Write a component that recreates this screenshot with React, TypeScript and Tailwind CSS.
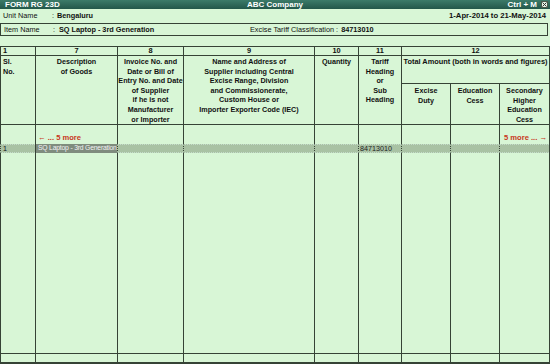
import React from "react";

const COLS = "grid-cols-[35px_82px_66px_131px_44px_43px_49px_49px_50px]";
const LINE = "border-[#364336]";

// header texts for columns 1..11 (col 12 handled on its own)
const headers: { num: string; lines: string[]; left?: boolean }[] = [
    { num: "1", lines: ["Sl.", "No."], left: true },
    { num: "7", lines: ["Description", "of Goods"] },
    { num: "8", lines: ["Invoice No. and", "Date or Bill of", "Entry No. and Date", "of Supplier", "if he is not", "Manufacturer", "or Importer"] },
    { num: "9", lines: ["Name and Address of", "Supplier including Central", "Excise Range, Division", "and Commissionerate,", "Custom House or", "Importer Exporter Code (IEC)"] },
    { num: "10", lines: ["Quantity"] },
    { num: "11", lines: ["Tariff", "Heading", "or", "Sub", "Heading"] },
];

const subHeaders = [
    ["Excise", "Duty"],
    ["Education", "Cess"],
    ["Secondary", "Higher", "Education", "Cess"],
];

function Lines({ lines }: { lines: string[] }) {
    return (
        <>
            {lines.map((l, i) => (
                <div key={i} className="whitespace-nowrap">{l}</div>
            ))}
        </>
    );
}

export default function App() {
    return (
        <div
            className="w-[550px] h-[364px] flex flex-col bg-[#d8f6d6] text-[#111] overflow-hidden"
            style={{ fontFamily: '"Liberation Sans", Arial, sans-serif' }}
        >
            {/* Title bar */}
            <div className="h-[9px] flex items-center bg-gradient-to-b from-[#3c7b69] to-[#23574a] text-white font-bold text-[8px] leading-none px-[5px] relative">
                <span>FORM RG 23D</span>
                <span className="absolute left-0 right-0 text-center pointer-events-none">ABC Company</span>
                <span className="ml-auto mr-[4px]">Ctrl + M</span>
                <span className="w-[7px] h-[7px] bg-[#e4f4e4] border border-[#4a5a4a] flex items-center justify-center -mr-[3px]">
                    <svg width="5" height="5" viewBox="0 0 5 5">
                        <path d="M0.5 0.5 L4.5 4.5 M4.5 0.5 L0.5 4.5" stroke="#333" strokeWidth="1" />
                    </svg>
                </span>
            </div>

            {/* Unit row */}
            <div className="h-[14px] flex items-center text-[7.3px] leading-none px-[3px]">
                <span className="w-[49px]">Unit Name</span>
                <span className="w-[5px]">:</span>
                <span className="font-bold">Bengaluru</span>
                <span className="ml-auto mr-[1px] font-bold text-[7.7px]">1-Apr-2014 to 21-May-2014</span>
            </div>

            {/* Item row */}
            <div className={`h-[13px] flex items-center text-[7.3px] leading-none px-[3px] border ${LINE} mr-[2px]`}>
                <span className="w-[49px]">Item Name</span>
                <span className="w-[6px]">:</span>
                <span className="font-bold w-[191px]">SQ Laptop - 3rd Generation</span>
                <span>Excise Tariff Classification :</span>
                <span className="font-bold ml-[3px]">84713010</span>
            </div>

            <div className="h-[10px]" />

            {/* Table */}
            <div className={`flex-1 flex flex-col border-t border-r ${LINE} text-[7.2px]`}>
                {/* column numbers */}
                <div className={`grid ${COLS} h-[9px] border-b ${LINE} font-bold leading-[8px] text-[7.4px]`}>
                    {headers.map((h) => (
                        <div key={h.num} className={`border-l ${LINE} ${h.left ? "pl-[2px]" : "text-center"}`}>{h.num}</div>
                    ))}
                    <div className={`col-span-3 border-l ${LINE} text-center`}>12</div>
                </div>

                {/* header texts */}
                <div className={`grid ${COLS} grid-rows-[28px_40px] border-b ${LINE} font-bold leading-[9.6px]`}>
                    {headers.map((h) => (
                        <div key={h.num} className={`row-span-2 border-l ${LINE} pt-[1px] ${h.left ? "pl-[2px]" : "text-center"}`}>
                            <Lines lines={h.lines} />
                        </div>
                    ))}
                    <div className={`col-span-3 border-l border-b ${LINE} pt-[1px] text-center text-[7.4px]`}>
                        Total Amount (both in words and figures)
                    </div>
                    {subHeaders.map((s, i) => (
                        <div key={i} className={`border-l ${LINE} pt-[2px] text-center`}>
                            <Lines lines={s} />
                        </div>
                    ))}
                </div>

                {/* body */}
                <div className={`flex-1 grid ${COLS} grid-rows-[19px_9px_1fr] border-b ${LINE}`}>
                    {Array.from({ length: 9 }).map((_, i) => (
                        <div key={"a" + i} className={`border-l ${LINE} relative`}>
                            {i === 1 && (
                                <span className="absolute left-[2px] bottom-[2px] font-bold text-[#c8361c] whitespace-nowrap leading-none text-[7.6px]">
                                    ← ... 5 more
                                </span>
                            )}
                            {i === 8 && (
                                <span className="absolute right-[2px] bottom-[2px] font-bold text-[#c8361c] whitespace-nowrap leading-none text-[7.6px]">
                                    5 more ... →
                                </span>
                            )}
                        </div>
                    ))}
                    {Array.from({ length: 9 }).map((_, i) => (
                        <div
                            key={"b" + i}
                            className={`border-l ${LINE} flex items-center leading-none whitespace-nowrap overflow-hidden ${i === 1 ? "bg-[#7f8c7e]" : "bg-[#a9c2a4] border-y border-y-[#c5dccb] border-dotted"}`}
                        >
                            {i === 0 && <span className="pl-[2px]">1</span>}
                            {i === 1 && <span className="pl-[2px] text-[6.8px] text-[#f2f2f2] tracking-[-0.2px]">SQ Laptop - 3rd Generation</span>}
                            {i === 5 && <span className="pl-[1px] text-[#222]">84713010</span>}
                        </div>
                    ))}
                    {Array.from({ length: 9 }).map((_, i) => (
                        <div key={"c" + i} className={`border-l ${LINE}`} />
                    ))}
                </div>

                {/* totals */}
                <div className={`grid ${COLS} h-[10px] border-b-2 ${LINE}`}>
                    {Array.from({ length: 9 }).map((_, i) => (
                        <div key={"t" + i} className={`border-l ${LINE}`} />
                    ))}
                </div>
            </div>
        </div>
    );
}
